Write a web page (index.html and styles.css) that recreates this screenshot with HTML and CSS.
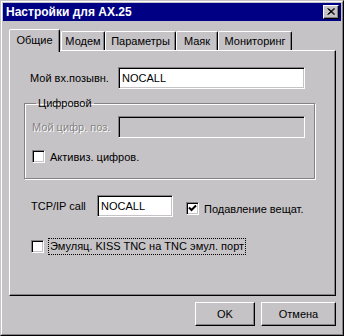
FILE: index.html
```html
<html>
    <head>
        <title>Настройки для AX.25</title>
        <link rel="stylesheet" href="styles.css">
    </head>
    <body>
        <div class="window">
            <div class="window-inner">
                <div class="titlebar">
                    <span class="title">Настройки для AX.25</span>
                    <div class="close">
                        <svg width="8" height="7" viewBox="0 0 8 7"><path d="M0.5 0.5 L7 6.5 M1.5 0.5 L8 6.5 M7 0.5 L0.5 6.5 M8 0.5 L1.5 6.5" stroke="#000" stroke-width="1" fill="none"/></svg>
                    </div>
                </div>
                <div class="dialog-body">
                    <div class="tabs">
                        <div class="tab active tab-general">Общие</div>
                        <div class="tab tab-modem">Модем</div>
                        <div class="tab tab-params">Параметры</div>
                        <div class="tab tab-beacon">Маяк</div>
                        <div class="tab tab-monitor">Мониторинг</div>
                    </div>
                    <div class="panel">
                        <div class="row row-call">
                            <span class="label label-call">Мой вх.позывн.</span>
                            <div class="input input-call">NOCALL</div>
                        </div>
                        <fieldset class="group">
                            <legend>Цифровой</legend>
                            <div class="row row-digi">
                                <span class="label label-digi disabled">Мой цифр. поз.</span>
                                <div class="input input-call input-disabled"></div>
                            </div>
                            <div class="check check-digi">
                                <span class="box"></span>
                                <span class="check-text">Активиз. цифров.</span>
                            </div>
                        </fieldset>
                        <div class="row row-tcp">
                            <span class="label label-tcp">TCP/IP call</span>
                            <div class="input input-tcp">NOCALL</div>
                            <div class="check check-suppress">
                                <span class="box">
                                    <svg width="9" height="9" viewBox="0 0 9 9"><path d="M1 3.5 L3.5 6 L8 1.5" stroke="#000" stroke-width="2" fill="none"/></svg>
                                </span>
                                <span class="check-text">Подавление вещат.</span>
                            </div>
                        </div>
                        <div class="check check-kiss">
                            <span class="box"></span>
                            <span class="check-text focus">Эмуляц. KISS TNC на TNC эмул. порт</span>
                        </div>
                    </div>
                    <div class="buttons">
                        <div class="button button-ok">OK</div>
                        <div class="button button-cancel">Отмена</div>
                    </div>
                </div>
            </div>
        </div>
    </body>
</html>
```
FILE: styles.css
```css
* {
    box-sizing: border-box;
}

body {
    margin: 0;
    background-color: #c6c3c6;
    font-family: "Liberation Sans", Arial, sans-serif;
    font-size: 11px;
    color: #000000;
}

.window {
    width: 344px;
    height: 336px;
    border: 1px solid;
    border-color: #c6c3c6 #000000 #000000 #c6c3c6;
}

.window-inner {
    height: 100%;
    border: 1px solid;
    border-color: #ffffff #848284 #848284 #ffffff;
    padding: 1px;
    display: flex;
    flex-direction: column;
}

.titlebar {
    height: 18px;
    background-color: #000084;
    color: #ffffff;
    display: flex;
    align-items: center;
    justify-content: space-between;
    padding: 0 2px 0 3px;
}

.title {
    font-weight: bold;
    font-size: 12px;
}

.close {
    width: 16px;
    height: 14px;
    background-color: #c6c3c6;
    border: 1px solid;
    border-color: #ffffff #000000 #000000 #ffffff;
    box-shadow: inset -1px -1px #848284;
    display: flex;
    align-items: center;
    justify-content: center;
    padding-bottom: 1px;
}

.dialog-body {
    flex: 1;
    padding: 8px 5px 0 6px;
    display: flex;
    flex-direction: column;
}

/* tabs */

.tabs {
    display: flex;
    height: 21px;
    align-items: flex-end;
}

.tab {
    height: 19px;
    border: 1px solid;
    border-bottom: none;
    border-color: #ffffff #000000 transparent #ffffff;
    box-shadow: inset -1px 0 #848284;
    border-radius: 2px 2px 0 0;
    display: flex;
    align-items: center;
    justify-content: center;
    padding-bottom: 1px;
}

.tab.active {
    height: 23px;
    margin-bottom: -2px;
    position: relative;
    z-index: 1;
    background-color: #c6c3c6;
    padding-bottom: 3px;
}

.tab-general { width: 51px; }
.tab-modem { width: 44px; margin-left: 1px; }
.tab-params { width: 71px; }
.tab-beacon { width: 42px; }
.tab-monitor { width: 74px; }

.panel {
    height: 246px;
    border: 1px solid;
    border-color: #ffffff #000000 #000000 #ffffff;
    box-shadow: inset -1px -1px #848284;
    padding: 16px 0 0 14px;
    display: flex;
    flex-direction: column;
    align-items: flex-start;
}

/* form rows */

.row {
    display: flex;
    align-items: center;
}

.label {
    flex-shrink: 0;
}

.row-call {
    padding-left: 6px;
}

.label-call {
    width: 88px;
}

.input {
    height: 22px;
    border: 1px solid;
    border-color: #848284 #ffffff #ffffff #848284;
    box-shadow: inset 1px 1px #000000, inset -1px -1px #c6c3c6;
    background-color: #ffffff;
    padding: 4px 3px 0 3px;
    font-size: 11px;
}

.input-call {
    width: 187px;
}

.input-disabled {
    background-color: #c6c3c6;
}

.disabled {
    color: #848284;
    text-shadow: 1px 1px #ffffff;
}

.group {
    margin: 8px 0 0 0;
    width: 291px;
    border: 1px solid #848284;
    box-shadow: 1px 1px #ffffff, inset 1px 1px #ffffff;
    padding: 7px 0 15px 7px;
}

.group legend {
    padding: 0 2px;
    margin-left: 4px;
}

.label-digi {
    width: 86px;
}

.check {
    display: flex;
    align-items: center;
}

.box {
    width: 13px;
    height: 13px;
    flex-shrink: 0;
    border: 1px solid;
    border-color: #848284 #ffffff #ffffff #848284;
    box-shadow: inset 1px 1px #000000, inset -1px -1px #c6c3c6;
    background-color: #ffffff;
    display: flex;
    align-items: center;
    justify-content: center;
}

.check-text {
    margin-left: 5px;
}

.check-digi {
    margin-top: 12px;
}

.row-tcp {
    margin-top: 16px;
    padding-left: 7px;
}

.label-tcp {
    width: 66px;
}

.input-tcp {
    width: 76px;
}

.check-suppress {
    margin-left: 13px;
    margin-top: 5px;
}

.check-kiss {
    margin-top: 21px;
    padding-left: 7px;
}

.check-kiss .check-text {
    margin-left: 4px;
}

.focus {
    border: 1px dotted #000000;
    padding: 1px 1px 2px 1px;
}

/* buttons */

.buttons {
    display: flex;
    justify-content: flex-end;
    gap: 6px;
    margin-top: 6px;
}

.button {
    height: 24px;
    border: 1px solid;
    border-color: #ffffff #000000 #000000 #ffffff;
    box-shadow: inset -1px -1px #848284;
    display: flex;
    align-items: center;
    justify-content: center;
}

.button-ok {
    width: 60px;
}

.button-cancel {
    width: 75px;
}
```
